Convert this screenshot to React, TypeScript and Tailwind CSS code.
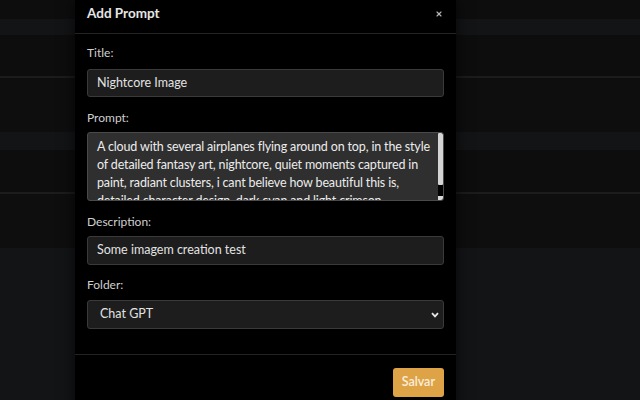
import { X } from "lucide-react";

const promptLines = [
  "A cloud with several airplanes flying around on top, in the style",
  "of detailed fantasy art, nightcore, quiet moments captured in",
  "paint, radiant clusters, i cant believe how beautiful this is,",
  "detailed character design, dark cyan and light crimson",
];

function Backdrop() {
  return (
    <div className="flex flex-col">
      <div className="h-[19px] bg-[#0d0d0e]" />
      <div className="h-[16px] bg-[#131415]" />
      <div className="h-[41px] bg-[#0d0d0d]" />
      <div className="h-[2px] bg-[#1c1c1d]" />
      <div className="h-[54px] bg-[#0e0e0e]" />
      <div className="h-[18px] bg-[#131415]" />
      <div className="h-[42px] bg-[#0d0d0d]" />
      <div className="h-[2px] bg-[#1c1c1d]" />
      <div className="h-[54px] bg-[#0e0e0e]" />
    </div>
  );
}

export default function App() {
  return (
    <div className="relative h-[400px] w-[640px] overflow-hidden bg-[#131416] font-['Lato',sans-serif]">
      <Backdrop />

      <div className="absolute left-[75px] top-0 w-[381px] bg-black shadow-[0_0_14px_rgba(0,0,0,0.7)]">
        <div className="flex h-[34px] items-start justify-between border-b border-[#232323] px-3 pt-[3px]">
          <h2 className="text-[13.5px] font-bold leading-5 text-[#e6e6e6]">Add Prompt</h2>
          <button className="mr-[1px] mt-[7px] text-[#b5b5b5]">
            <X size={8} strokeWidth={3.5} />
          </button>
        </div>

        <div className="px-3 pb-[25px] pt-[11px] text-[12.5px] text-[#e2e2e2]">
          <label className="mb-[8px] block text-[12px] leading-4 text-[#cfcfcf]">Title:</label>
          <div className="flex h-[28px] items-center rounded-[3px] border border-[#3a3a3a] bg-[#1d1d1d] px-[9px]">
            Nightcore Image
          </div>

          <label className="mb-[6px] mt-[13px] block text-[12px] leading-4 text-[#cfcfcf]">Prompt:</label>
          <div className="flex h-[69px] overflow-hidden rounded-[3px] border border-[#4a4a4a] bg-[#2f2f2f]">
            <div className="flex-1 overflow-hidden whitespace-nowrap px-[9px] pt-[5px] leading-[18px] tracking-[-0.15px] text-[#ececec]">
              {promptLines.map((line) => (
                <div key={line}>{line}</div>
              ))}
            </div>
            <div className="flex w-[5px] flex-col bg-black">
              <div className="h-[52px] rounded-[1px] bg-[#d4d4d4]" />
              <div className="flex-1" />
              <div className="h-[4px] bg-[#d8d8d8]" />
            </div>
          </div>

          <label className="mb-[6px] mt-[13px] block text-[12px] leading-4 text-[#cfcfcf]">Description:</label>
          <div className="flex h-[29px] items-center rounded-[3px] border border-[#3a3a3a] bg-[#1d1d1d] px-[9px]">
            Some imagem creation test
          </div>

          <label className="mb-[7px] mt-[12px] block text-[12px] leading-4 text-[#cfcfcf]">Folder:</label>
          <div className="flex h-[29px] items-center justify-between rounded-[3px] border border-[#3a3a3a] bg-[#1d1d1d] pl-[12px] pr-[4px]">
            <span>Chat GPT</span>
            <svg width="8" height="6" viewBox="0 0 8 6" className="text-[#e6e6e6]">
              <polyline points="1,1.2 4,4.4 7,1.2" fill="none" stroke="currentColor" strokeWidth="1.8" />
            </svg>
          </div>
        </div>

        <div className="flex justify-end border-t border-[#232323] px-3 pb-4 pt-[13px]">
          <button className="h-[29px] rounded-[3px] bg-[#dea346] px-[9px] text-[12.5px] font-semibold text-[#fbeedd]">
            Salvar
          </button>
        </div>
      </div>
    </div>
  );
}
